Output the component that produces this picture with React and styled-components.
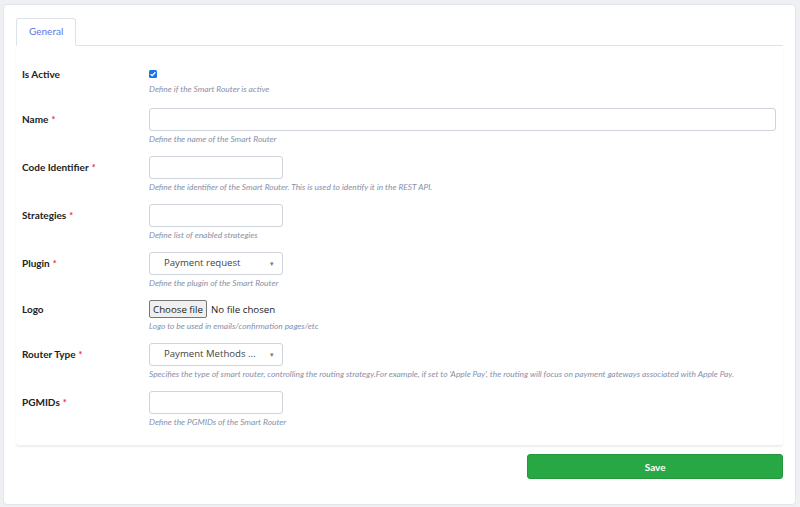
import React from "react";
import styled, { createGlobalStyle } from "styled-components";

const GlobalStyle = createGlobalStyle`
  html, body {
    margin: 0;
    padding: 0;
    background: #eef0f4;
    font-family: Lato, "Noto Sans", sans-serif;
  }
`;

const fields = [
  { label: "Is Active", kind: "checkbox", hint: "Define if the Smart Router is active" },
  { label: "Name", required: true, kind: "text", wide: true, hint: "Define the name of the Smart Router" },
  {
    label: "Code Identifier",
    required: true,
    kind: "text",
    hint: "Define the identifier of the Smart Router. This is used to identify it in the REST API.",
  },
  { label: "Strategies", required: true, kind: "text", hint: "Define list of enabled strategies" },
  { label: "Plugin", required: true, kind: "select", value: "Payment request", hint: "Define the plugin of the Smart Router" },
  { label: "Logo", kind: "file", hint: "Logo to be used in emails/confirmation pages/etc" },
  {
    label: "Router Type",
    required: true,
    kind: "select",
    value: "Payment Methods ...",
    hint: "Specifies the type of smart router, controlling the routing strategy.For example, if set to 'Apple Pay', the routing will focus on payment gateways associated with Apple Pay.",
  },
  { label: "PGMIDs", required: true, kind: "text", hint: "Define the PGMIDs of the Smart Router", last: true },
];

export default function App() {
  return (
    <>
      <GlobalStyle />
      <Card>
        <TabBar>
          <Tab>General</Tab>
        </TabBar>
        <Panel>
          {fields.map((f) => (
            <Row key={f.label} $first={f.kind === "checkbox"} $last={f.last}>
              <Label $h={controlHeight(f.kind)}>
                {f.label}
                {f.required && <Req>*</Req>}
              </Label>
              <Field>
                {renderControl(f)}
                <Hint>{f.hint}</Hint>
              </Field>
            </Row>
          ))}
        </Panel>
        <Actions>
          <SaveButton>Save</SaveButton>
        </Actions>
      </Card>
    </>
  );
}

function controlHeight(kind) {
  if (kind === "checkbox") return 8;
  if (kind === "file") return 18;
  return 23;
}

function renderControl(f) {
  if (f.kind === "checkbox") {
    return (
      <Check>
        <svg width="8" height="8" viewBox="0 0 8 8">
          <path d="M1.6 4.2 L3.2 5.7 L6.4 2.2" stroke="#fff" strokeWidth="1.3" fill="none" />
        </svg>
      </Check>
    );
  }
  if (f.kind === "file") {
    return (
      <FileRow>
        <FileButton>Choose file</FileButton>
        <FileName>No file chosen</FileName>
      </FileRow>
    );
  }
  if (f.kind === "select") {
    return (
      <Select>
        <span>{f.value}</span>
        <Caret>▾</Caret>
      </Select>
    );
  }
  return <TextInput $wide={f.wide} />;
}

const Card = styled.div`
  margin: 4px 4px 2px 3px;
  background: #fff;
  border: 1px solid #e2e5eb;
  border-radius: 4px;
  padding: 13px 12px 25px 12px;
`;

const TabBar = styled.div`
  display: flex;
  border-bottom: 1px solid #dfe2e8;
`;

const Tab = styled.div`
  height: 23px;
  padding: 0 12px 3px;
  display: flex;
  align-items: center;
  font-size: 10px;
  color: #5b78e6;
  border: 1px solid #dfe2e8;
  border-bottom: 1px solid #fff;
  border-radius: 3px 3px 0 0;
  margin-bottom: -1px;
  background: #fff;
`;

const Panel = styled.div`
  padding: 24px 7px 18px 6px;
  box-shadow: 0 2px 2px rgba(0, 0, 0, 0.07);
  border-radius: 0 0 3px 3px;
`;

const Row = styled.div`
  display: grid;
  grid-template-columns: 127px 1fr;
  margin-bottom: ${(p) => (p.$last ? "0" : p.$first ? "14px" : "12px")};
`;

const Label = styled.div`
  font-size: 10px;
  font-weight: 700;
  color: #222;
  line-height: ${(p) => p.$h}px;
  white-space: nowrap;
`;

const Req = styled.span`
  color: #e0303a;
  font-size: 9px;
  margin-left: 3px;
`;

const Field = styled.div`
  display: flex;
  flex-direction: column;
  align-items: flex-start;
`;

const Hint = styled.div`
  margin-top: 3px;
  font-size: 8.4px;
  font-style: italic;
  line-height: 10px;
  color: #8790a8;
  white-space: nowrap;
`;

const Check = styled.div`
  width: 8px;
  height: 8px;
  border-radius: 1.5px;
  background: #1a73e8;
  display: flex;
  margin-bottom: 3px;
`;

const TextInput = styled.div`
  box-sizing: border-box;
  height: 23px;
  width: ${(p) => (p.$wide ? "100%" : "134px")};
  border: 1px solid #cfd3db;
  border-radius: 3px;
  background: #fff;
`;

const Select = styled.div`
  box-sizing: border-box;
  height: 23px;
  width: 134px;
  border: 1px solid #cfd3db;
  border-radius: 3px;
  display: flex;
  align-items: center;
  justify-content: space-between;
  padding: 0 8px 2px 14px;
  font-size: 9.6px;
  color: #444;
  font-family: "Open Sans", sans-serif;
`;

const Caret = styled.span`
  font-size: 7px;
  color: #777;
  padding-top: 2px;
`;

const FileRow = styled.div`
  display: flex;
  align-items: center;
  height: 18px;
`;

const FileButton = styled.div`
  box-sizing: border-box;
  height: 18px;
  width: 58px;
  display: flex;
  align-items: center;
  justify-content: center;
  border: 1px solid #767676;
  border-radius: 2px;
  background: #efefef;
  font-size: 9.7px;
  color: #222;
  font-family: "Open Sans", sans-serif;
`;

const FileName = styled.span`
  margin-left: 4px;
  font-size: 9.7px;
  color: #222;
  font-family: "Open Sans", sans-serif;
`;

const Actions = styled.div`
  display: grid;
  grid-template-columns: 2fr 1fr;
  padding-top: 9px;
`;

const SaveButton = styled.button`
  grid-column: 2;
  height: 25px;
  border: 1px solid #24963c;
  border-radius: 3px;
  background: #28a745;
  color: #fff;
  font-family: Lato, sans-serif;
  font-weight: 700;
  font-size: 10px;
`;
